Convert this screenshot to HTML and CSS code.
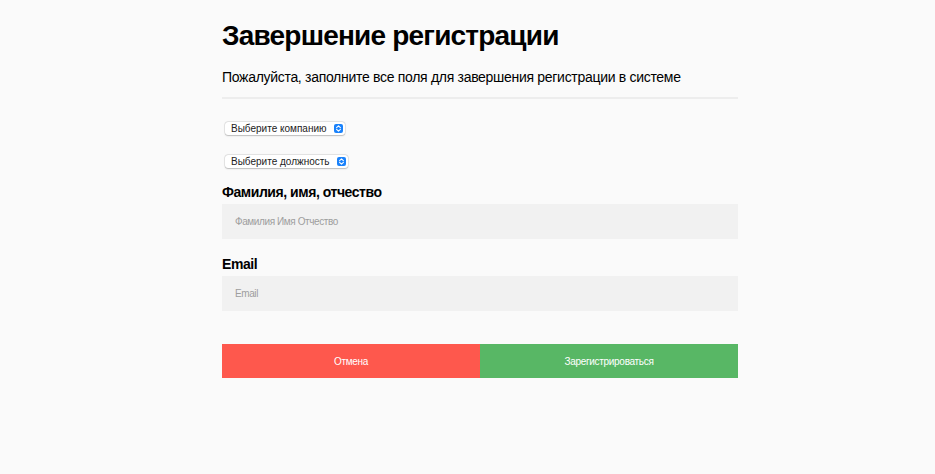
FILE: index.html
```html
<!DOCTYPE html>
<html lang="ru">
<head>
<meta charset="utf-8">
<title>Завершение регистрации</title>
<link rel="stylesheet" href="styles.css">
</head>
<body>
<main class="page">
  <h1 class="title">Завершение регистрации</h1>
  <p class="subtitle">Пожалуйста, заполните все поля для завершения регистрации в системе</p>
  <hr class="divider">
  <form class="form">
    <div class="select select-company">
      <span class="select-text">Выберите компанию</span>
      <span class="select-arrow"><svg width="9" height="9" viewBox="0 0 9 9"><path d="M2.6 3.6 L4.5 1.8 L6.4 3.6 M2.6 5.4 L4.5 7.2 L6.4 5.4" fill="none" stroke="#fff" stroke-width="1.1" stroke-linecap="round" stroke-linejoin="round"/></svg></span>
    </div>
    <div class="select select-position">
      <span class="select-text">Выберите должность</span>
      <span class="select-arrow"><svg width="9" height="9" viewBox="0 0 9 9"><path d="M2.6 3.6 L4.5 1.8 L6.4 3.6 M2.6 5.4 L4.5 7.2 L6.4 5.4" fill="none" stroke="#fff" stroke-width="1.1" stroke-linecap="round" stroke-linejoin="round"/></svg></span>
    </div>
    <label class="label label-name">Фамилия, имя, отчество</label>
    <input class="input" type="text" placeholder="Фамилия Имя Отчество">
    <label class="label label-email">Email</label>
    <input class="input" type="email" placeholder="Email">
    <div class="buttons">
      <button type="button" class="btn btn-cancel">Отмена</button>
      <button type="button" class="btn btn-submit">Зарегистрироваться</button>
    </div>
  </form>
</main>
</body>
</html>
```
FILE: styles.css
```css
html, body {
  margin: 0;
  padding: 0;
  background: #fafafa;
}
body {
  font-family: "Liberation Sans", Arial, Helvetica, sans-serif;
  color: #000;
}
.page {
  width: 516px;
  margin-left: 222px;
  padding-top: 18px;
}
.title {
  margin: 0;
  font-size: 28px;
  line-height: 36px;
  font-weight: bold;
  letter-spacing: -0.8px;
}
.subtitle {
  margin: 13px 0 0;
  font-size: 14px;
  line-height: 20px;
  letter-spacing: -0.3px;
}
.divider {
  margin: 10px 0 0;
  border: 0;
  height: 2px;
  background: #ededed;
}
.form {
  display: flex;
  flex-direction: column;
  align-items: flex-start;
}
.select {
  display: flex;
  align-items: center;
  box-sizing: border-box;
  height: 13px;
  margin-left: 3px;
  padding: 0 2px 0 6px;
  background: #fff;
  border-radius: 3px;
  box-shadow: 0 0 0 0.5px rgba(0,0,0,0.12), 0 0.5px 1.5px rgba(0,0,0,0.2);
  font-size: 10px;
  line-height: 13px;
  color: #222;
}
.select-company {
  margin-top: 23px;
}
.select-position {
  margin-top: 20px;
}
.select-text {
  margin-right: 7px;
}
.select-arrow {
  display: flex;
  width: 9px;
  height: 9px;
  border-radius: 2px;
  background: #1a82fb;
}
.label {
  font-size: 14px;
  line-height: 18px;
  font-weight: bold;
  letter-spacing: -0.45px;
}
.label-name {
  margin-top: 15px;
}
.label-email {
  margin-top: 16px;
}
.input {
  box-sizing: border-box;
  width: 100%;
  height: 35px;
  margin-top: 3px;
  padding: 0 13px;
  border: 0;
  background: #f1f1f1;
  font-family: "Liberation Sans", Arial, sans-serif;
  font-size: 10px;
  letter-spacing: -0.4px;
  color: #333;
  outline: none;
}
.input::placeholder {
  color: #9e9e9e;
}
.buttons {
  display: flex;
  width: 100%;
  margin-top: 33px;
}
.btn {
  flex: 1;
  height: 34px;
  border: 0;
  color: #fff;
  font-family: "Liberation Sans", Arial, sans-serif;
  font-size: 10px;
  letter-spacing: -0.3px;
  cursor: pointer;
}
.btn-cancel {
  background: #fe584d;
}
.btn-submit {
  background: #58b765;
}
```
